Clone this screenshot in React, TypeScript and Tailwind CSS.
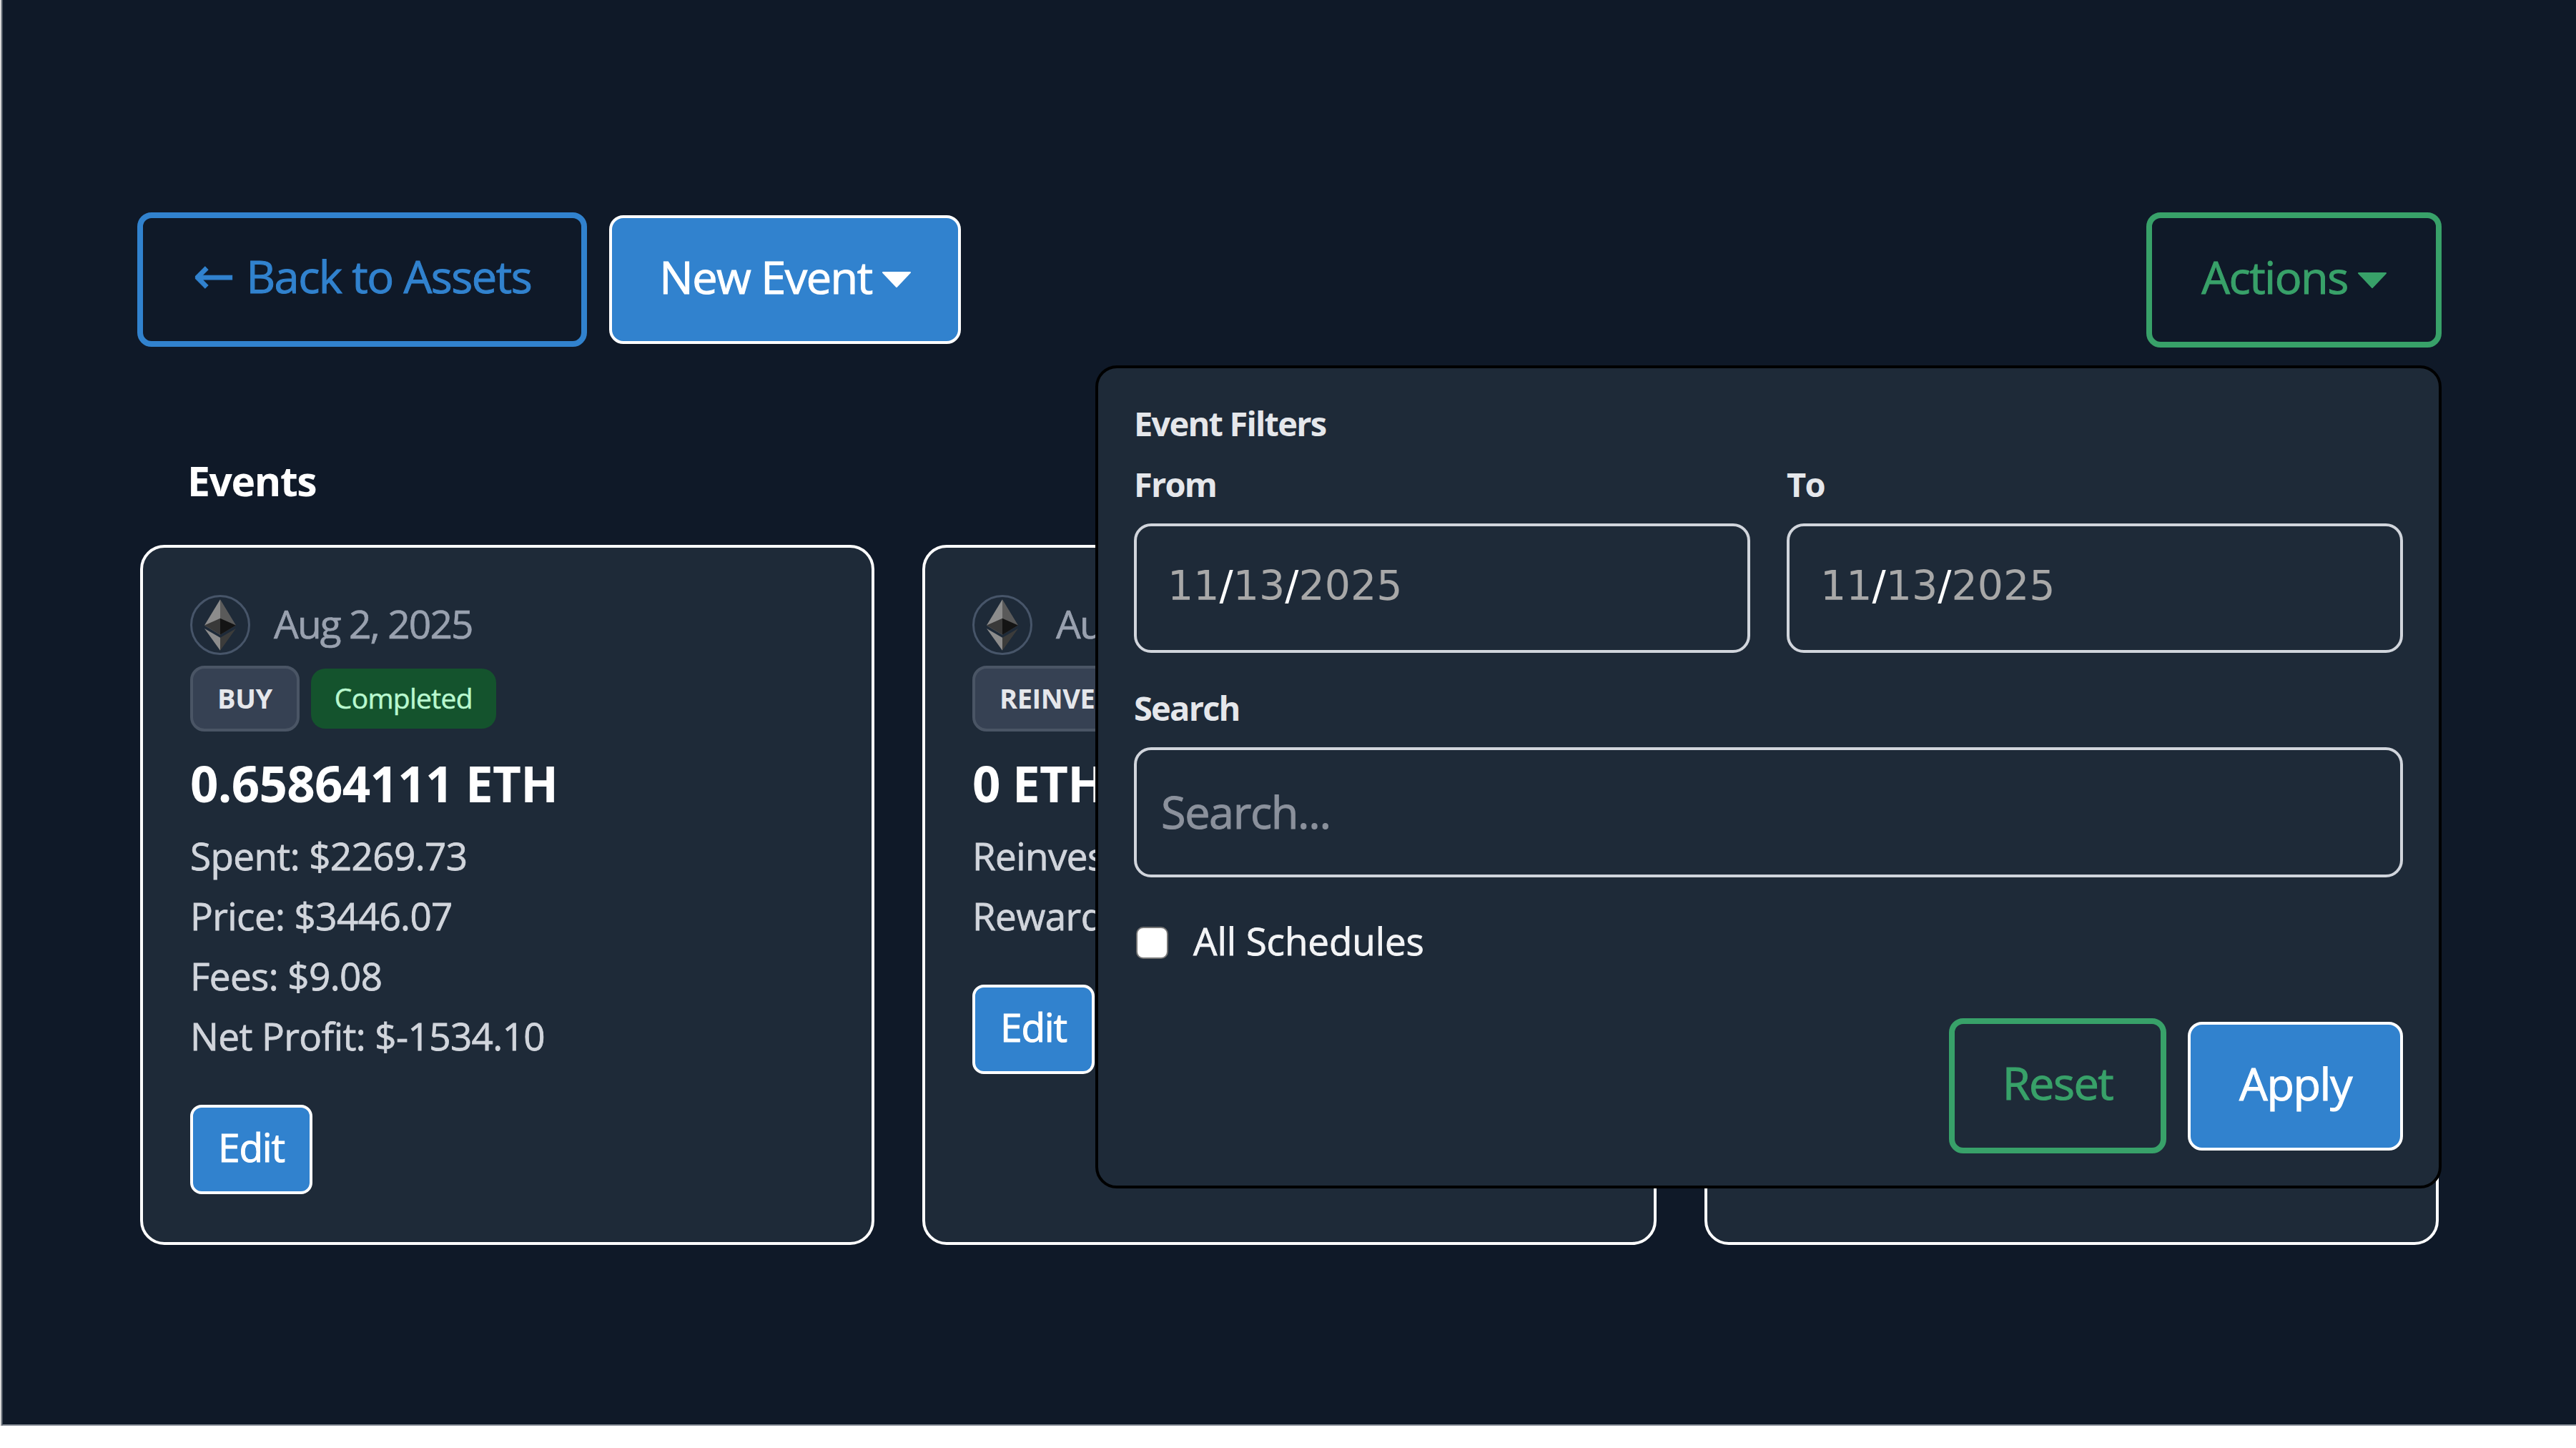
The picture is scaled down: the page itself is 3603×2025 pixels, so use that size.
const sans = "font-['Open_Sans',sans-serif]";

function EthIcon() {
  return (
    <div className="flex h-[84px] w-[84px] shrink-0 items-center justify-center rounded-full border-[3px] border-[#475569]">
      <svg viewBox="0 0 256 417" className="h-[72px] w-[44px]">
        <polygon fill="#5a5a5a" points="128,0 256,212 128,288" />
        <polygon fill="#8c8c8c" points="128,0 0,212 128,288" />
        <polygon fill="#3c3c3b" points="128,312 128,417 256,237" />
        <polygon fill="#8c8c8c" points="128,417 128,312 0,237" />
        <polygon fill="#141414" points="128,288 256,212 128,154" />
        <polygon fill="#393939" points="0,212 128,288 128,154" />
      </svg>
    </div>
  );
}

function Caret() {
  return (
    <svg viewBox="0 0 40 22" className="ml-[14px] mt-[8px] h-[22px] w-[40px] fill-current">
      <polygon points="1,1 39,1 20,21" stroke="currentColor" strokeWidth="2" strokeLinejoin="round" />
    </svg>
  );
}

function DateField({ label }: { label: string }) {
  return (
    <div>
      <span className="block text-[47px] font-bold leading-[84px] tracking-[-1.8px] text-[#e5e7eb]">{label}</span>
      <div className="mt-[13px] flex h-[181px] w-full items-center rounded-[24px] border-[4px] border-[#d1d5dc] px-[43px] pb-[6px] font-['DejaVu_Sans',sans-serif] text-[57px] text-[#a8a8a8]">
        <span>11</span>
        <span className="text-white">/</span>
        <span>13</span>
        <span className="text-white">/</span>
        <span>2025</span>
      </div>
    </div>
  );
}

function Card({ badge, amount, lines }: { badge: string; amount: string; lines: string[] }) {
  return (
    <div className="h-[979px] rounded-[34px] border-[4px] border-white bg-[#1e2a38] px-[66px] pt-[64px]">
      <div className="flex items-center gap-[33px]">
        <EthIcon />
        <span className="pb-[4px] text-[55px] leading-[84px] tracking-[-1.9px] text-[#99a1af] [-webkit-text-stroke:0.7px_currentColor]">Aug 2, 2025</span>
      </div>
      <div className="mt-[13px] flex items-center gap-[16px]">
        <span className="flex h-[92px] items-center rounded-[20px] border-[4px] border-[#4a5565] bg-[#364153] px-[34px] pb-[2px] text-[38px] font-bold tracking-[-0.4px] text-[#e5e7eb]">{badge}</span>
        <span className="flex h-[84px] items-center rounded-[20px] bg-[#14532d] px-[33px] pb-[2px] text-[39px] tracking-[-0.7px] text-[#b9f8cf] [-webkit-text-stroke:0.5px_currentColor]">Completed</span>
      </div>
      <div className="mt-[22px] text-[69px] font-bold leading-[100px] tracking-[-0.7px] text-white">{amount}</div>
      <div className="mt-[10px] text-[53px] leading-[84px] tracking-[-0.6px] text-[#d1d5dc] [-webkit-text-stroke:0.8px_currentColor]">
        {lines.map((l) => (
          <div key={l}>{l}</div>
        ))}
      </div>
      <button className="mt-[54px] flex h-[125px] w-[171px] items-center justify-center rounded-[16px] border-[4px] border-white bg-[#3182ce] pb-[6px] text-[55px] tracking-[-1.2px] text-white [-webkit-text-stroke:1px_currentColor]">
        Edit
      </button>
    </div>
  );
}

export default function App() {
  return (
    <div className={`${sans} border-l-[2px] border-[#d8d8d8] bg-white`}>
      <div className="relative h-[1994px] border-b-[2px] border-l-[2px] border-b-[#8f959e] border-l-[#4a5460] bg-[#0f1928] px-[188px] pt-[297px]">
        <div className="flex items-start justify-between">
          <div className="flex items-center gap-[31px]">
            <button className="flex h-[188px] w-[629px] items-center justify-center rounded-[20px] border-[8px] border-[#3182ce] pb-[10px] text-[63px] tracking-[-1.5px] text-[#3182ce] [-webkit-text-stroke:1px_currentColor]">
              <span className="mr-[16px] font-['DejaVu_Sans',sans-serif] text-[70px] tracking-normal">←</span>Back to Assets
            </button>
            <button className="flex h-[180px] w-[492px] items-center justify-center rounded-[20px] border-[4px] border-white bg-[#3182ce] pb-[8px] text-[63px] tracking-[-1.5px] text-white [-webkit-text-stroke:1px_currentColor]">
              New Event
              <Caret />
            </button>
          </div>
          <button className="flex h-[189px] w-[413px] items-center justify-center rounded-[20px] border-[8px] border-[#38a169] pb-[8px] text-[63px] tracking-[-1.5px] text-[#38a169] [-webkit-text-stroke:1px_currentColor]">
            Actions
            <Caret />
          </button>
        </div>

        <h2 className="mt-[158px] pl-[70px] text-[57px] font-bold leading-[56px] tracking-[-1.4px] text-white">Events</h2>

        <div className="mt-[62px] ml-[4px] mr-[4px] grid grid-cols-3 gap-[67px]">
          <Card
            badge="BUY"
            amount="0.65864111 ETH"
            lines={["Spent: $2269.73", "Price: $3446.07", "Fees: $9.08", "Net Profit: $-1534.10"]}
          />
          <Card badge="REINVEST" amount="0 ETH" lines={["Reinvested: $0.00", "Rewards: $0.00"]} />
          <div className="h-[979px] rounded-[34px] border-[4px] border-white bg-[#1e2a38]" />
        </div>

        <div className="absolute left-[1528px] top-[511px] h-[1151px] w-[1883px] rounded-[30px] border-[4px] border-black bg-[#1e2a38] px-[50px] pt-[35px]">
          <div className="text-[47px] font-bold leading-[84px] tracking-[-1.8px] text-[#e5e7eb]">Event Filters</div>
          <div className="mt-[1px] grid grid-cols-2 gap-[51px]">
            <DateField label="From" />
            <DateField label="To" />
          </div>
          <label className="mt-[35px] block">
            <span className="block text-[47px] font-bold leading-[84px] tracking-[-1.8px] text-[#e5e7eb]">Search</span>
            <input
              placeholder="Search..."
              className="mt-[13px] h-[182px] w-full rounded-[24px] border-[4px] border-[#d1d5dc] bg-transparent px-[34px] pb-[4px] text-[63px] tracking-[-1.4px] text-white outline-none placeholder:text-[#8b919c] [-webkit-text-stroke:1px_#8b919c]"
            />
          </label>
          <label className="mt-[66px] flex items-center gap-[35px] pl-[3px]">
            <input type="checkbox" className="h-[45px] w-[45px] appearance-none rounded-[10px] border-[2px] border-[#767676] bg-white" />
            <span className="pb-[5px] text-[53px] leading-[46px] tracking-[-0.1px] text-[#f3f4f6] [-webkit-text-stroke:0.8px_currentColor]">All Schedules</span>
          </label>
          <div className="mt-[80px] flex items-center justify-end gap-[30px]">
            <button className="flex h-[189px] w-[304px] items-center justify-center rounded-[20px] border-[8px] border-[#38a169] pb-[8px] text-[63px] tracking-[-1.5px] text-[#38a169] [-webkit-text-stroke:1px_currentColor]">Reset</button>
            <button className="flex h-[180px] w-[301px] items-center justify-center rounded-[20px] border-[4px] border-white bg-[#3182ce] pb-[6px] text-[63px] tracking-[-1.5px] text-white [-webkit-text-stroke:1px_currentColor]">Apply</button>
          </div>
        </div>
      </div>
    </div>
  );
}
